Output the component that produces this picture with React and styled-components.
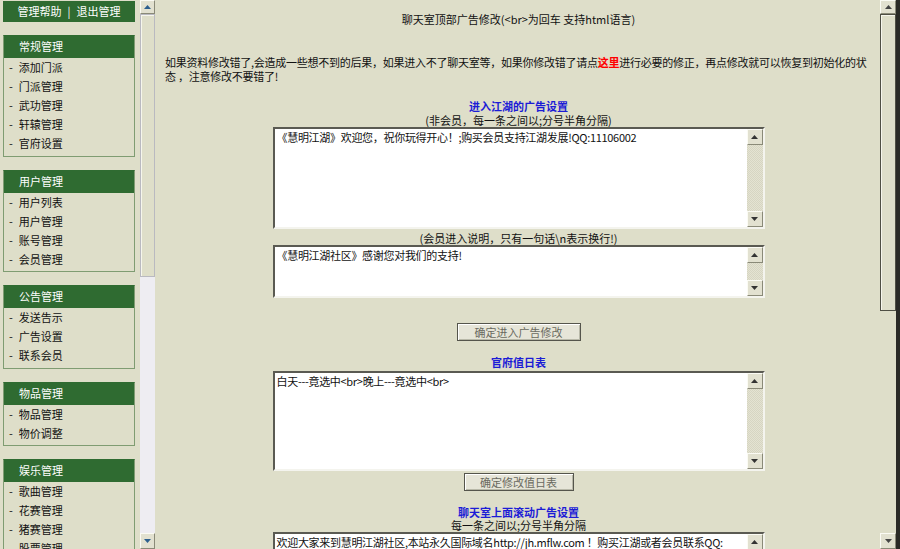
import React from "react";
import styled, { createGlobalStyle } from "styled-components";

const GlobalStyle = createGlobalStyle`
  html, body {
    margin: 0;
    padding: 0;
    height: 100%;
    overflow: hidden;
    background: #dedec9;
  }
  body {
    font-family: "Noto Sans CJK SC", "Liberation Sans", sans-serif;
    font-size: 11px;
    color: #111;
  }
`;

const GREEN = "#2f6b31";
const BLUE = "#1c1cd6";

const menus = [
  { title: "常规管理", items: ["添加门派", "门派管理", "武功管理", "轩辕管理", "官府设置"] },
  { title: "用户管理", items: ["用户列表", "用户管理", "账号管理", "会员管理"] },
  { title: "公告管理", items: ["发送告示", "广告设置", "联系会员"] },
  { title: "物品管理", items: ["物品管理", "物价调整"] },
  { title: "娱乐管理", items: ["歌曲管理", "花赛管理", "猪赛管理", "股票管理"] },
];

const Screen = styled.div`
  display: flex;
  width: 900px;
  height: 549px;
  overflow: hidden;
  background: #dedec9;
`;

/* ---------- scrollbars ---------- */

const ScrollBar = styled.div`
  width: ${(p) => p.$width || 15}px;
  flex-shrink: 0;
  display: flex;
  flex-direction: column;
  background: ${(p) => p.$track || "#dedec9"};
`;

const ScrollButton = styled.div`
  height: ${(p) => p.$h || 14}px;
  flex-shrink: 0;
  box-sizing: border-box;
  display: flex;
  align-items: center;
  justify-content: center;
  background: #e2e1d0;
  border: 1px solid;
  border-color: #fbfbf4 #8a8a78 #8a8a78 #fbfbf4;
`;

const Thumb = styled.div`
  height: ${(p) => p.$size}px;
  flex-shrink: 0;
  box-sizing: border-box;
  background: #dedec9;
  border: 1px solid ${(p) => p.$edge};
  box-shadow: inset 1px 1px 0 #f6f6ec;
`;

const Track = styled.div`
  flex: 1;
`;

const Arrow = ({ down, color }) => (
  <svg width="7" height="4" viewBox="0 0 7 4">
    <polygon points={down ? "0,0 7,0 3.5,4" : "0,4 7,4 3.5,0"} fill={color} />
  </svg>
);

/* ---------- sidebar ---------- */

const SideFrame = styled.div`
  display: flex;
  flex-shrink: 0;
  padding-right: 2px;
`;

const SideBody = styled.div`
  width: 140px;
  box-sizing: border-box;
  padding: 1px 0 0 3px;
  display: flex;
  flex-direction: column;
  gap: 13px;
  overflow: hidden;
`;

const TopBox = styled.div`
  width: 132px;
  height: 21px;
  flex-shrink: 0;
  background: ${GREEN};
  color: #fff;
  display: flex;
  align-items: center;
  justify-content: center;
  gap: 6px;
  line-height: 21px;
`;

const Card = styled.div`
  width: 132px;
  flex-shrink: 0;
  box-sizing: border-box;
  border: 1px solid #7f9c72;
  border-top-color: ${GREEN};
`;

const CardHead = styled.div`
  height: 22px;
  line-height: 21px;
  background: ${GREEN};
  color: #fff;
  padding-left: 15px;
`;

const CardList = styled.div`
  padding-bottom: 2.5px;
`;

const CardItem = styled.div`
  height: 19px;
  line-height: 19px;
  padding-left: 5px;
  display: flex;
  gap: 6px;
  color: #111;
`;

/* ---------- main ---------- */

const MainFrame = styled.div`
  flex: 1;
  display: flex;
  border-right: 4px solid #2a2a26;
`;

const MainBody = styled.div`
  flex: 1;
  box-sizing: border-box;
  padding: 12px 8px 0;
  display: flex;
  flex-direction: column;
  align-items: center;
  overflow: hidden;
`;

const Title = styled.div`
  line-height: 14px;
  text-align: center;
  color: #111;
`;

const Notice = styled.p`
  margin: 29px 0 0;
  align-self: stretch;
  line-height: 14px;
  letter-spacing: -0.25px;
  white-space: nowrap;
  color: #111;
`;

const Here = styled.b`
  color: #f00;
`;

const Heading = styled.div`
  margin-top: ${(p) => p.$gap}px;
  line-height: 14px;
  font-weight: bold;
  color: ${BLUE};
`;

const Hint = styled.div`
  margin-top: ${(p) => p.$gap || 0}px;
  line-height: ${(p) => p.$lh || 14}px;
  color: #111;
`;

const TextBox = styled.div`
  width: 492px;
  height: ${(p) => p.$h}px;
  flex-shrink: 0;
  margin-top: ${(p) => p.$gap || 0}px;
  box-sizing: border-box;
  display: flex;
  background: #fff;
  border: 2px solid;
  border-color: #5a5a52 #f4f4ee #f4f4ee #5a5a52;
  box-shadow: inset 1px 1px 0 #2c2c28;
`;

const Field = styled.textarea`
  flex: 1;
  border: none;
  outline: none;
  resize: none;
  overflow: hidden;
  margin: 0;
  padding: 1px 1px 0 2px;
  background: #fff;
  font-family: "Noto Sans CJK SC", "Liberation Sans", sans-serif;
  font-size: 11px;
  line-height: 14px;
  color: #111;
  letter-spacing: -0.3px;
`;

const Button = styled.button`
  width: ${(p) => p.$w}px;
  height: 18px;
  margin-top: ${(p) => p.$gap}px;
  padding: 0;
  flex-shrink: 0;
  font-family: "Noto Sans CJK SC", "Liberation Sans", sans-serif;
  font-size: 11px;
  color: #6a6a60;
  background: #e6e5d8;
  border: 1px solid #55554c;
  box-shadow: inset 1px 1px 0 #fff, inset -1px -1px 0 #b8b8a8;
`;

const BoxScroll = () => (
  <ScrollBar $width={16} $track="repeating-conic-gradient(#e4e3d2 0 25%, #d6d5c2 0 50%) 0 0 / 2px 2px">
    <ScrollButton $h={16}>
      <Arrow color="#333" />
    </ScrollButton>
    <Track />
    <ScrollButton $h={16}>
      <Arrow down color="#333" />
    </ScrollButton>
  </ScrollBar>
);

const Area = ({ h, gap, text }) => (
  <TextBox $h={h} $gap={gap}>
    <Field readOnly value={text} />
    <BoxScroll />
  </TextBox>
);

export default function App() {
  return (
    <>
      <GlobalStyle />
      <Screen>
        <SideFrame>
          <SideBody>
            <TopBox>
              <span>管理帮助</span>
              <span>|</span>
              <span>退出管理</span>
            </TopBox>
            {menus.map((m) => (
              <Card key={m.title}>
                <CardHead>{m.title}</CardHead>
                <CardList>
                  {m.items.map((it) => (
                    <CardItem key={it}>
                      <span>-</span>
                      <span>{it}</span>
                    </CardItem>
                  ))}
                </CardList>
              </Card>
            ))}
          </SideBody>
          <ScrollBar $width={15} $track="#eeedf2">
            <ScrollButton>
              <Arrow color="#2c5f8e" />
            </ScrollButton>
            <Thumb $size={263} $edge="#b9b9c0" />
            <Track />
            <ScrollButton $h={16}>
              <Arrow down color="#2c5f8e" />
            </ScrollButton>
          </ScrollBar>
        </SideFrame>

        <MainFrame>
          <MainBody>
            <Title>聊天室顶部广告修改(&lt;br&gt;为回车 支持html语言)</Title>
            <Notice>
              如果资料修改错了,会造成一些想不到的后果，如果进入不了聊天室等，如果你修改错了请点
              <Here>这里</Here>
              进行必要的修正，再点修改就可以恢复到初始化的状
              <br />态 ，注意修改不要错了!
            </Notice>

            <Heading $gap={16}>进入江湖的广告设置</Heading>
            <Hint>(非会员，每一条之间以;分号半角分隔)</Hint>
            <Area h={102} text="《慧明江湖》欢迎您，祝你玩得开心！;购买会员支持江湖发展!QQ:11106002" />
            <Hint $gap={2}>(会员进入说明，只有一句话\n表示换行!)</Hint>
            <Area h={53} text="《慧明江湖社区》感谢您对我们的支持!" />
            <Button $w={124} $gap={25}>确定进入广告修改</Button>

            <Heading $gap={14}>官府值日表</Heading>
            <Area h={100} gap={2} text="白天---竟选中<br>晚上---竟选中<br>" />
            <Button $w={110} $gap={2}>确定修改值日表</Button>

            <Heading $gap={14}>聊天室上面滚动广告设置</Heading>
            <Hint $lh={13}>每一条之间以;分号半角分隔</Hint>
            <Area h={80} text="欢迎大家来到慧明江湖社区,本站永久国际域名http://jh.mflw.com ！购买江湖或者会员联系QQ:" />
          </MainBody>
          <ScrollBar $width={16}>
            <ScrollButton>
              <Arrow color="#444" />
            </ScrollButton>
            <Thumb $size={297} $edge="#4f4f44" />
            <Track />
            <ScrollButton $h={16}>
              <Arrow down color="#444" />
            </ScrollButton>
          </ScrollBar>
        </MainFrame>
      </Screen>
    </>
  );
}
